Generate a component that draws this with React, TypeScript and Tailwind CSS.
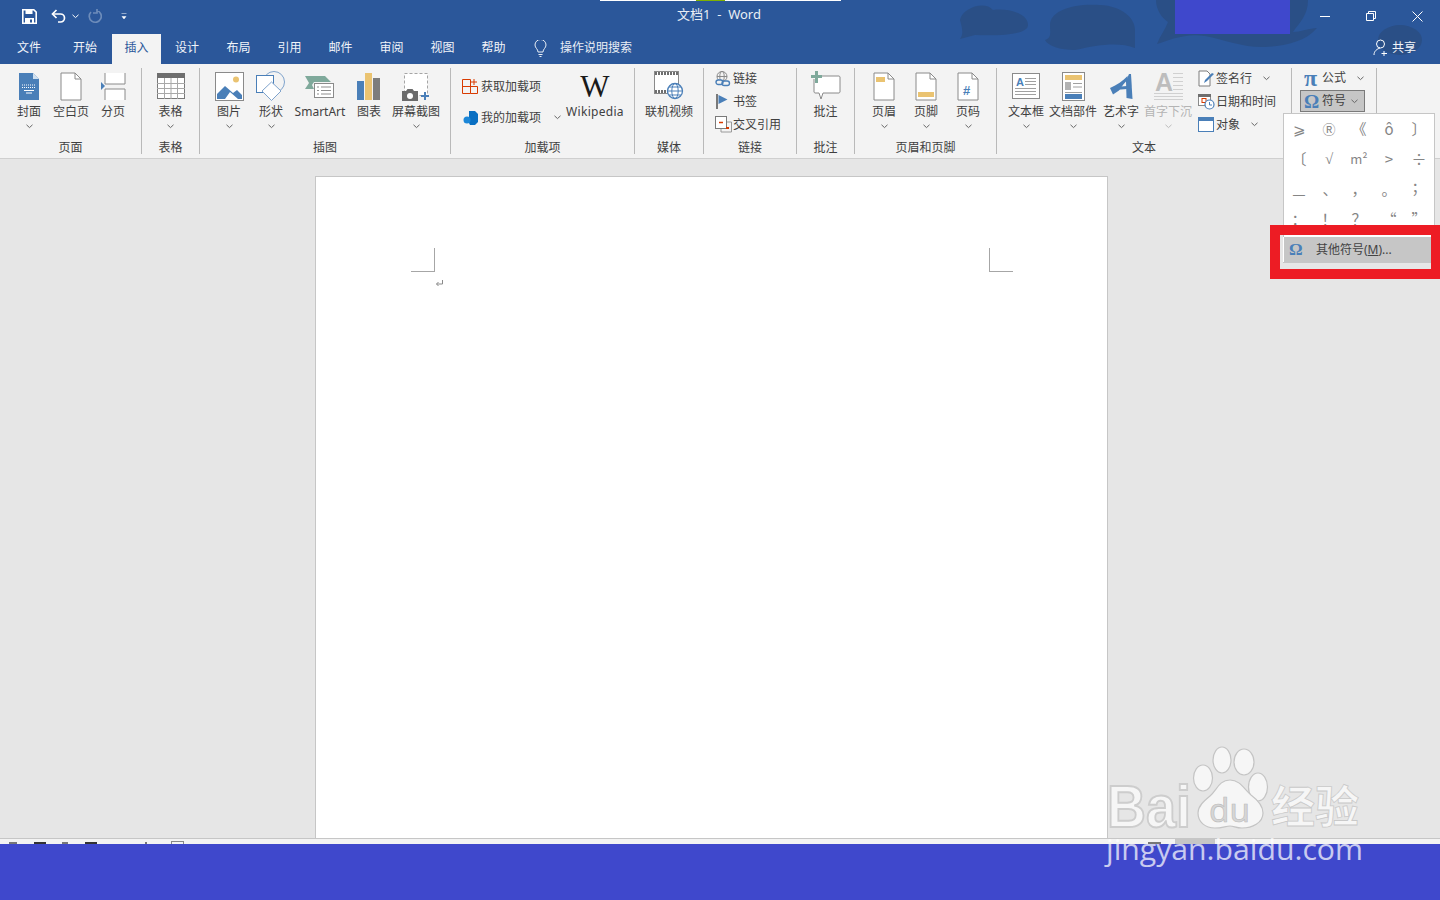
import type { ReactNode } from "react"

const GRAY = "#8a8a8a"
const BLUE = "#4a7fb8"

function Chevron({ color = "#666" }: { color?: string }) {
  return (
    <svg width="7" height="5" viewBox="0 0 7 5" className="block">
      <path d="M0.5 0.8 L3.5 3.6 L6.5 0.8" fill="none" stroke={color} strokeWidth="1" />
    </svg>
  )
}

function Icon({ w, h, children }: { w: number; h: number; children: ReactNode }) {
  return (
    <svg width={w} height={h} viewBox={`0 0 ${w} ${h}`} className="block shrink-0">
      {children}
    </svg>
  )
}

function LargeButton({
  label,
  width,
  icon,
  arrow = true,
  disabled = false,
}: {
  label: string
  width: string
  icon: ReactNode
  arrow?: boolean
  disabled?: boolean
}) {
  return (
    <div className={`flex flex-col items-center ${width}`}>
      <div className="h-[32px] flex items-center justify-center">{icon}</div>
      <div className={`h-[19px] leading-[19px] whitespace-nowrap ${disabled ? "text-[#b4b4b4]" : ""}`}>{label}</div>
      {arrow && (
        <div className="mt-[3px]">
          <Chevron color={disabled ? "#bbb" : "#666"} />
        </div>
      )}
    </div>
  )
}

function SmallButton({ icon, label, arrowGap }: { icon: ReactNode; label: string; arrowGap?: string }) {
  return (
    <div className="flex items-center h-[23px]">
      <div className="w-[18px] flex justify-start">{icon}</div>
      <span className="whitespace-nowrap">{label}</span>
      {arrowGap && (
        <div className={arrowGap}>
          <Chevron />
        </div>
      )}
    </div>
  )
}

function Group({ label, width, className = "", children }: { label: string; width: string; className?: string; children: ReactNode }) {
  return (
    <div className={`flex flex-col h-[86px] border-r border-[#b9b9b9] shrink-0 ${width}`}>
      <div className={`h-[68px] flex pt-[2px] ${className}`}>{children}</div>
      <div className="h-[18px] pt-[3px] leading-[18px] text-center">{label}</div>
    </div>
  )
}

const CoverIcon = (
  <Icon w={22} h={29}>
    <path d="M1 1h14l6 6v21H1z" fill={BLUE} />
    <path d="M15 1l6 6h-6z" fill="#cfe0f0" />
    <path d="M4 13h14M4 15.5h14" stroke="#fff" strokeDasharray="1 1" />
    <path d="M6 18.5h10M8 21h6" stroke="#fff" />
  </Icon>
)

const BlankIcon = (
  <Icon w={22} h={29}>
    <path d="M1 1h14l6 6v21H1z" fill="#fff" stroke={GRAY} />
    <path d="M15 1v6h6" fill="none" stroke={GRAY} />
  </Icon>
)

const BreakIcon = (
  <Icon w={26} h={29}>
    <path d="M5 1v11h20V1M5 28V17h20v11" fill="#fff" stroke={GRAY} />
    <path d="M1 10l4 4-4 4z" fill={BLUE} />
  </Icon>
)

const TableIcon = (
  <Icon w={28} h={26}>
    <rect x="0.5" y="0.5" width="27" height="25" fill="#fff" stroke="#7a7a7a" />
    <rect x="0" y="0" width="28" height="5" fill="#6e6e6e" />
    <path d="M0 10.5h28M0 15.5h28M0 20.5h28M7.5 5v21M14 5v21M20.5 5v21" stroke="#a8a8a8" />
  </Icon>
)

const PictureIcon = (
  <Icon w={29} h={29}>
    <rect x="0.5" y="0.5" width="28" height="28" fill="#fff" stroke={GRAY} />
    <circle cx="21" cy="7.5" r="3" fill="#eac371" />
    <path d="M2 27v-5l8-8 8 7 4-3 5 5v4h-4l-8-7-5 7z" fill={BLUE} />
  </Icon>
)

const ShapesIcon = (
  <Icon w={30} h={30}>
    <circle cx="18" cy="11" r="10.5" fill="none" stroke="#7fa3cc" />
    <rect x="0.5" y="4.5" width="17" height="17" fill="#fff" stroke={BLUE} />
    <path d="M15.5 11l9.500 9-9.500 9.500-9.500-9.500z" fill="#fff" stroke="#7fa3cc" />
  </Icon>
)

const SmartArtIcon = (
  <Icon w={30} h={25}>
    <path d="M0 2h20l6 6H9l-2 3 2 4H0l4-6z" fill="#7fa99b" />
    <rect x="9.5" y="9.5" width="19" height="14" fill="#fff" stroke={GRAY} />
    <path d="M12 13h2M16 13h10M12 16.5h2M16 16.5h10M12 20h2M16 20h10" stroke="#8d8d8d" />
  </Icon>
)

const ChartIcon = (
  <Icon w={24} h={27}>
    <rect x="0" y="8" width="7" height="19" fill={BLUE} />
    <rect x="8" y="0" width="7" height="27" fill="#eac371" />
    <rect x="16" y="5" width="7" height="22" fill="#7d7d7d" />
  </Icon>
)

const ScreenshotIcon = (
  <Icon w={30} h={29}>
    <rect x="3.5" y="1.5" width="23" height="22" fill="#fff" stroke="#a5a5a5" strokeDasharray="3 2" />
    <path d="M1 19h4l1.5-2h5l1.5 2h4v10H1z" fill="#6b6b6b" />
    <circle cx="9" cy="24" r="3" fill="#fff" />
    <path d="M24 20v8M20 24h8" stroke={BLUE} strokeWidth="2" />
  </Icon>
)

const GetAddinIcon = (
  <Icon w={16} h={16}>
    <path d="M0.500 0.500h8v14h-8zM0.500 7.500h15v7h-7M12 0v6M9 3h6" fill="none" stroke="#d83b01" />
  </Icon>
)

const MyAddinIcon = (
  <Icon w={15} h={15}>
    <path d="M6 1l6 0 3 3v8l-3 3H7l-1-2z" fill="#0a6fc2" />
    <circle cx="4" cy="10" r="3.5" fill="#1c87d8" />
  </Icon>
)

const VideoIcon = (
  <Icon w={30} h={30}>
    <rect x="0.5" y="0.5" width="24" height="22" fill="#fff" stroke={GRAY} />
    <path d="M1 2.5h23M1 20.5h14" stroke="#6e6e6e" strokeWidth="3" strokeDasharray="2 1" />
    <circle cx="21" cy="20" r="7.5" fill="#fff" stroke={BLUE} strokeWidth="1.3" />
    <ellipse cx="21" cy="20" rx="3.2" ry="7.5" fill="none" stroke={BLUE} />
    <path d="M14 20h14M15 16h12M15 24h12" stroke={BLUE} />
  </Icon>
)

const LinkIcon = (
  <Icon w={16} h={16}>
    <circle cx="7" cy="5.5" r="5" fill="none" stroke="#8a8a8a" />
    <ellipse cx="7" cy="5.5" rx="2.2" ry="5" fill="none" stroke="#8a8a8a" />
    <path d="M2 5.5h10" stroke="#8a8a8a" />
    <rect x="1" y="9" width="7" height="4.5" rx="2.2" fill="#f3f3f3" stroke={BLUE} strokeWidth="1.4" />
    <rect x="7" y="10" width="7.5" height="4.5" rx="2.2" fill="none" stroke={BLUE} strokeWidth="1.4" />
  </Icon>
)

const BookmarkIcon = (
  <Icon w={14} h={15}>
    <rect x="1" y="0" width="2" height="15" fill="#7a7a7a" />
    <path d="M3.5 1l9 4.5-9 4.5z" fill={BLUE} />
  </Icon>
)

const CrossRefIcon = (
  <Icon w={17} h={17}>
    <rect x="0.5" y="0.5" width="11" height="12" fill="#fff" stroke="#7a7a7a" />
    <path d="M4 6.5h4" stroke="#d83b01" strokeWidth="1.5" />
    <path d="M12 6h4.5v10H6v-3" fill="none" stroke="#9a9a9a" />
    <rect x="11" y="11" width="3" height="2" fill="#d83b01" />
  </Icon>
)

const CommentIcon = (
  <Icon w={30} h={30}>
    <path d="M5 5h23a1.500 1.500 0 0 1 1 1v15a1.500 1.500 0 0 1-1 1H12l-2 6-2-6H4a1.500 1.500 0 0 1-1-1V8" fill="#fff" stroke="#8a8a8a" />
    <path d="M4 0h3v4h4v3H7v5H4V7H0V4h4z" fill="#7fa99b" />
  </Icon>
)

function PageIcon({ children }: { children?: ReactNode }) {
  return (
    <Icon w={22} h={29}>
      <path d="M1 1h14l6 6v21H1z" fill="#fff" stroke={GRAY} />
      <path d="M15 1v6h6" fill="none" stroke={GRAY} />
      {children}
    </Icon>
  )
}

const TextBoxIcon = (
  <Icon w={28} h={26}>
    <rect x="0.5" y="0.5" width="27" height="25" fill="#fff" stroke={GRAY} />
    <text x="4" y="13" fontSize="11" fontWeight="700" fill={BLUE} fontFamily="'Liberation Sans', sans-serif">A</text>
    <path d="M13 5.500h11M13 8.500h11M13 11.500h11M3 15.500h21M3 18.500h21M3 21.500h21" stroke="#a0a0a0" />
  </Icon>
)

const DocPartsIcon = (
  <Icon w={23} h={29}>
    <rect x="0.5" y="0.500" width="22" height="28" fill="#fff" stroke={GRAY} />
    <rect x="3" y="3" width="17" height="5" fill="#eac371" />
    <rect x="3" y="10" width="6" height="8" fill="#b2b2b2" />
    <path d="M11 11.500h9M11 15h9M3 20.500h17" stroke="#a0a0a0" />
    <rect x="3" y="22" width="17" height="5" fill={BLUE} />
  </Icon>
)

const WordArtIcon = (
  <Icon w={24} h={27}>
    <path d="M20 1L22 1L23.500 26L17.500 25L17 8z" fill={BLUE} />
    <path d="M18.500 3C14 8 8 12 1 15L4 21.500L10 17.500C13 13 16 9 19 7z" fill={BLUE} />
    <path d="M6 14L18 13L18 16L6 17z" fill={BLUE} />
  </Icon>
)

const DropCapIcon = (
  <Icon w={29} h={29}>
    <text x="1" y="19" fontSize="25" fontWeight="700" fill="#bdbdbd" fontFamily="'Liberation Sans', sans-serif">A</text>
    <path d="M19 1.500h10M19 5.500h10M19 9.500h10M19 13.500h10M19 17.500h10M0 21.500h29M0 24.500h29M0 27.500h29" stroke="#d0d0d0" />
  </Icon>
)

const SignatureIcon = (
  <Icon w={17} h={17}>
    <path d="M1 1h8l3 3v12H1z" fill="#fff" stroke="#7d7d7d" />
    <path d="M6 13l1-3 7-7 2 1-7 7z" fill={BLUE} />
  </Icon>
)

const DateIcon = (
  <Icon w={17} h={17}>
    <rect x="0.5" y="1.500" width="12" height="11" fill="#fff" stroke="#8a8a8a" />
    <rect x="0" y="1" width="13" height="3" fill="#6e6e6e" />
    <rect x="4" y="5.500" width="4" height="4" fill="#fff" stroke="#d83b01" />
    <circle cx="11.500" cy="11.500" r="4.500" fill="#fff" stroke={BLUE} strokeWidth="1.200" />
    <path d="M11.500 9v3h2.500" fill="none" stroke={BLUE} />
  </Icon>
)

const ObjectIcon = (
  <Icon w={16} h={15}>
    <rect x="0.500" y="0.500" width="15" height="14" fill="#fff" stroke={BLUE} />
    <rect x="0" y="0" width="16" height="4" fill={BLUE} />
  </Icon>
)

function Baidu() {
  return (
    <svg width="270" height="135" viewBox="1100 745 270 135" className="absolute left-[1100px] top-[745px] pointer-events-none">
      <g fill="#f6f6f6" stroke="#c4c4c4" strokeWidth="1.200">
        <ellipse cx="1222" cy="760" rx="9" ry="13" />
        <ellipse cx="1244" cy="762" rx="10" ry="13" />
        <ellipse cx="1203" cy="778" rx="9.500" ry="13" />
        <ellipse cx="1258" cy="787" rx="9.500" ry="14" />
        <path d="M1230 780c10 0 14 9 21 15 8 6 12 12 12 18 0 10-11 15-21 15-6 0-8-2-12-2s-8 2-15 2c-10 0-17-6-17-15 0-7 6-12 12-17 7-6 9-16 20-16z" />
      </g>
      <text x="1107" y="827" fontSize="60" fontWeight="700" fill="#f6f6f6" stroke="#cdcdcd" strokeWidth="2" textLength="84" lengthAdjust="spacingAndGlyphs" fontFamily="'Liberation Sans', sans-serif">Bai</text>
      <text x="1209" y="822" fontSize="32" fontWeight="400" fill="#d6d6d6" stroke="#bbbbbb" strokeWidth="0.600" textLength="41" lengthAdjust="spacingAndGlyphs" fontFamily="'Noto Sans', sans-serif">du</text>
      <text x="1271" y="823" fontSize="44" fontWeight="700" fill="#f6f6f6" stroke="#c9c9c9" strokeWidth="0.800" textLength="88" lengthAdjust="spacingAndGlyphs" fontFamily="'Noto Sans CJK SC', sans-serif">经验</text>
      <text x="1106" y="860" fontSize="29" fill="#ffffff" fillOpacity="0.72" textLength="257" lengthAdjust="spacingAndGlyphs" fontFamily="'Open Sans', sans-serif">jingyan.baidu.com</text>
    </svg>
  )
}

const tabs = [
  { label: "文件", w: "w-[58px]" },
  { label: "开始", w: "w-[54px]" },
  { label: "插入", w: "w-[49px]", active: true },
  { label: "设计", w: "w-[52px]" },
  { label: "布局", w: "w-[51px]" },
  { label: "引用", w: "w-[51px]" },
  { label: "邮件", w: "w-[51px]" },
  { label: "审阅", w: "w-[51px]" },
  { label: "视图", w: "w-[51px]" },
  { label: "帮助", w: "w-[51px]" },
]

const symbols = [
  { s: "⩾" },
  { s: "Ⓡ", c: "text-[13px]" },
  { s: "《" },
  { s: "ô" },
  { s: "〕" },
  { s: "〔" },
  { s: "√", c: "font-['Liberation_Serif',serif]" },
  { s: "m²", c: "text-[13px]" },
  { s: ">" },
  { s: "÷" },
  { s: "—", c: "pt-[10px]" },
  { s: "、", c: "pl-[2px]" },
  { s: "，" },
  { s: "。" },
  { s: "；", c: "pb-[4px]" },
  { s: "：" },
  { s: "！" },
  { s: "？" },
  { s: "“" },
  { s: "”" },
]

export default function App() {
  return (
    <div className="relative w-[1440px] h-[900px] overflow-hidden flex flex-col bg-[#e6e6e6] text-[12px] text-[#3f3f3f] font-['Noto_Sans','Noto_Sans_CJK_SC',sans-serif]">
      {/* title bar */}
      <div className="relative h-[64px] bg-[#2b579a] text-white shrink-0">
        <svg width="480" height="64" viewBox="960 0 480 64" className="absolute right-0 top-0">
          <g fill="#2a4f86">
            <path d="M960 20C962 8 985 0 993 10C1005 8 1028 12 1028 25C1028 33 1010 36 975 35L960 39C964 33 962 28 960 20z" />
            <path d="M1050 25C1050 10 1075 3 1100 5C1122 6 1135 18 1135 30V48C1120 42 1100 44 1075 50C1060 50 1048 46 1045 40C1052 38 1050 32 1050 25z" />
            <path d="M1156 0C1156 10 1162 18 1168 22C1165 30 1160 36 1157 44C1170 40 1185 33 1205 36C1225 40 1245 48 1265 47C1285 46 1305 42 1317 28C1310 28 1300 32 1293 32C1300 22 1308 15 1308 0z" />
            <ellipse cx="1400" cy="40" rx="22" ry="15" />
          </g>
        </svg>
        <div className="relative h-[34px] flex items-center pb-[2px]">
          <div className="flex items-center pl-[22px]">
            <Icon w={15} h={15}>
              <path d="M0.800 0.800h11l2.400 2.400v11H0.800z" fill="none" stroke="#fff" strokeWidth="1.600" />
              <rect x="3.500" y="1" width="7" height="4" fill="#fff" />
              <rect x="3" y="9" width="9" height="5" fill="#fff" />
              <rect x="8" y="10.500" width="2" height="3" fill="#2b579a" />
            </Icon>
            <div className="ml-[14px]">
              <Icon w={15} h={14}>
                <path d="M2 5h7.500a4 4 0 0 1 0 8H7" fill="none" stroke="#fff" strokeWidth="1.700" />
                <path d="M5.500 1L1.500 5l4 4" fill="none" stroke="#fff" strokeWidth="1.700" />
              </Icon>
            </div>
            <div className="ml-[6px]">
              <Chevron color="#fff" />
            </div>
            <div className="ml-[8px]">
              <Icon w={15} h={15}>
                <path d="M4 3a6 6 0 1 0 6-1.500M10 0v4H6" fill="none" stroke="#6d8cba" strokeWidth="1.700" />
              </Icon>
            </div>
            <div className="ml-[19px]">
              <Icon w={7} h={7}>
                <path d="M0.500 0.500h5M1 3.500h4l-2 2.500z" fill="#fff" stroke="#fff" strokeWidth="0.500" />
              </Icon>
            </div>
          </div>
          <div className="absolute left-[677px] top-[4px] text-[13px] leading-[20px] whitespace-pre text-[#e9eef5]">文档1  -  Word</div>
          <div className="ml-auto flex items-center h-full">
            <div className="w-[46px] flex justify-center">
              <Icon w={10} h={10}>
                <path d="M0 5.500h10" stroke="#fff" />
              </Icon>
            </div>
            <div className="w-[46px] flex justify-center">
              <Icon w={10} h={10}>
                <path d="M0.500 2.500h7v7h-7zM2.500 2.500v-2h7v7h-2" fill="none" stroke="#fff" />
              </Icon>
            </div>
            <div className="w-[46px] flex justify-center">
              <Icon w={11} h={11}>
                <path d="M0.500 0.500l10 10M10.500 0.500l-10 10" stroke="#fff" />
              </Icon>
            </div>
          </div>
        </div>
        <div className="relative h-[30px] flex items-stretch">
          {tabs.map((t) => (
            <div
              key={t.label}
              className={`${t.w} flex items-center justify-center pb-[3px] ${t.active ? "bg-[#f3f3f3] text-[#2b579a]" : "text-[#f1f4f9]"}`}
            >
              {t.label}
            </div>
          ))}
          <div className="ml-[15px] flex items-center pb-[1px]">
            <Icon w={13} h={17}>
              <path d="M4 12c0-3-3-4-3-7a5.500 5.500 0 0 1 11 0c0 3-3 4-3 7zM4.500 14.500h4M5.500 16.500h2" fill="none" stroke="#e9eef5" />
            </Icon>
          </div>
          <div className="ml-[13px] flex items-center pb-[3px] text-[#e9eef5]">操作说明搜索</div>
          <div className="ml-auto mr-[24px] flex items-center gap-[4px] pb-[3px] text-[#f1f4f9]">
            <Icon w={15} h={17}>
              <circle cx="7.500" cy="5" r="4" fill="none" stroke="#fff" />
              <path d="M1 16c0-4 3-6 6-7M11 12v5M8.500 14.500h5.500" fill="none" stroke="#fff" />
            </Icon>
            共享
          </div>
        </div>
      </div>

      {/* ribbon */}
      <div className="h-[95px] bg-[#f3f3f3] border-b border-[#cfcfcf] flex pt-[4px] shrink-0">
        <Group label="页面" width="w-[142px]" className="pl-[8px]">
          <LargeButton label="封面" width="w-[42px]" icon={CoverIcon} />
          <LargeButton label="空白页" width="w-[42px]" icon={BlankIcon} arrow={false} />
          <LargeButton label="分页" width="w-[42px]" icon={BreakIcon} arrow={false} />
        </Group>
        <Group label="表格" width="w-[58px]" className="justify-center">
          <LargeButton label="表格" width="w-[42px]" icon={TableIcon} />
        </Group>
        <Group label="插图" width="w-[251px]" className="pl-[8px]">
          <LargeButton label="图片" width="w-[42px]" icon={PictureIcon} />
          <LargeButton label="形状" width="w-[42px]" icon={ShapesIcon} />
          <LargeButton label="SmartArt" width="w-[56px]" icon={SmartArtIcon} arrow={false} />
          <LargeButton label="图表" width="w-[42px]" icon={ChartIcon} arrow={false} />
          <LargeButton label="屏幕截图" width="w-[52px]" icon={ScreenshotIcon} />
        </Group>
        <Group label="加载项" width="w-[184px]" className="pl-[11px]">
          <div className="flex flex-col w-[101px]">
            <div className="h-[31px] flex items-center gap-[3px] mt-[1px]">
              {GetAddinIcon}
              <span>获取加载项</span>
            </div>
            <div className="h-[31px] flex items-center gap-[3px] pl-[1px]">
              {MyAddinIcon}
              <span>我的加载项</span>
              <span className="ml-[10px]">
                <Chevron />
              </span>
            </div>
          </div>
          <div className="flex flex-col items-center w-[64px]">
            <div className="h-[32px] flex items-center font-['Liberation_Serif',serif] text-[31px] text-[#1a1a1a] leading-none">W</div>
            <div className="h-[19px] leading-[19px] whitespace-nowrap tracking-[0.3px]">Wikipedia</div>
          </div>
        </Group>
        <Group label="媒体" width="w-[69px]" className="justify-center">
          <LargeButton label="联机视频" width="w-[52px]" icon={VideoIcon} arrow={false} />
        </Group>
        <Group label="链接" width="w-[93px]" className="pl-[11px] flex-col">
          <div className="-mt-[3px]">
            <SmallButton icon={LinkIcon} label="链接" />
            <SmallButton icon={BookmarkIcon} label="书签" />
            <SmallButton icon={CrossRefIcon} label="交叉引用" />
          </div>
        </Group>
        <Group label="批注" width="w-[58px]" className="justify-center">
          <LargeButton label="批注" width="w-[42px]" icon={CommentIcon} arrow={false} />
        </Group>
        <Group label="页眉和页脚" width="w-[142px]" className="pl-[8px]">
          <LargeButton
            label="页眉"
            width="w-[42px]"
            icon={
              <PageIcon>
                <rect x="3" y="5" width="9" height="5" fill="#eac371" />
              </PageIcon>
            }
          />
          <LargeButton
            label="页脚"
            width="w-[42px]"
            icon={
              <PageIcon>
                <rect x="3" y="20" width="16" height="5" fill="#eac371" />
              </PageIcon>
            }
          />
          <LargeButton
            label="页码"
            width="w-[42px]"
            icon={
              <PageIcon>
                <text x="6" y="23" fontSize="13" fontWeight="700" fill={BLUE} fontFamily="'Liberation Sans', sans-serif">#</text>
              </PageIcon>
            }
          />
        </Group>
        <Group label="文本" width="w-[295px]" className="pl-[8px]">
          <LargeButton label="文本框" width="w-[42px]" icon={TextBoxIcon} />
          <LargeButton label="文档部件" width="w-[52px]" icon={DocPartsIcon} />
          <LargeButton label="艺术字" width="w-[44px]" icon={WordArtIcon} />
          <LargeButton label="首字下沉" width="w-[50px]" icon={DropCapIcon} disabled />
          <div className="flex flex-col ml-[5px] -mt-[3px]">
            <SmallButton icon={SignatureIcon} label="签名行" arrowGap="ml-[11px]" />
            <SmallButton icon={DateIcon} label="日期和时间" />
            <SmallButton icon={ObjectIcon} label="对象" arrowGap="ml-[11px]" />
          </div>
        </Group>
        <Group label="" width="w-[85px]" className="pl-[8px] flex-col">
          <div className="-mt-[3px] flex items-center h-[22px] pl-[4px]">
            <span className="w-[18px] font-['Liberation_Serif',serif] font-bold text-[24px] leading-[20px] text-[#4a7fb8]">π</span>
            <span>公式</span>
            <span className="ml-[11px]">
              <Chevron />
            </span>
          </div>
          <div className="mt-[1px] flex items-center h-[22px] w-[65px] pl-[3px] bg-[#c6c6c6] border border-[#7a7a7a]">
            <span className="w-[18px] font-['Liberation_Serif',serif] font-bold text-[19px] leading-none text-[#4a7fb8]">Ω</span>
            <span>符号</span>
            <span className="ml-[5px]">
              <Chevron />
            </span>
          </div>
        </Group>
      </div>

      {/* document */}
      <div className="flex-1 pt-[17px] pl-[315px]">
        <div className="w-[793px] h-[662px] bg-white border-x border-t border-[#c6c6c6] pt-[71px] pl-[95px] pr-[94px]">
          <div className="flex justify-between">
            <div className="w-[24px] h-[24px] border-r border-b border-[#a6a6a6]" />
            <div className="w-[24px] h-[24px] border-l border-b border-[#a6a6a6]" />
          </div>
          <div className="pl-[24px] pt-[7px]">
            <Icon w={9} h={9}>
              <path d="M7.500 1v4H1.500M3.500 3l-2 2 2 2" fill="none" stroke="#8a8a8a" />
            </Icon>
          </div>
        </div>
      </div>

      {/* status bar, mostly covered */}
      <div className="h-[6px] bg-[#f3f3f3] border-t border-[#c6c6c6] flex items-end shrink-0">
        <div className="ml-[9px] w-[8px] h-[2px] bg-[#777]" />
        <div className="ml-[17px] w-[12px] h-[2px] bg-[#333]" />
        <div className="ml-[16px] w-[6px] h-[2px] bg-[#777]" />
        <div className="ml-[17px] w-[12px] h-[2px] bg-[#333]" />
        <div className="ml-[48px] w-[2px] h-[2px] bg-[#777]" />
        <div className="ml-[24px] w-[13px] h-[3px] border-x border-t border-[#888]" />
        <div className="ml-[964px] w-[13px] h-[2px] bg-[#777]" />
        <div className="ml-[14px] w-[40px] h-[5px] bg-[#c6c6c6]" />
      </div>
      <div className="h-[56px] bg-[#3f48cc] shrink-0" />

      {/* pasted-over marks on the screenshot */}
      <div className="absolute left-[600px] top-0 w-[241px] h-px bg-white" />
      <div className="absolute left-[696px] top-0 w-[29px] h-px bg-[#7fb000]" />
      <div className="absolute left-[1175px] top-0 w-[115px] h-[34px] bg-[#3f48cc]" />

      {/* symbol menu */}
      <div className="absolute left-[1283px] top-[113px] w-[152px] h-[150px] bg-white border border-[#c6c6c6] text-[#858585]">
        <div className="grid grid-cols-5 w-[150px] font-['Noto_Sans_CJK_SC',sans-serif] text-[15px]">
          {symbols.map((item, i) => (
            <div key={i} className={`h-[30px] flex items-center justify-center ${item.c ?? ""}`}>
              {item.s}
            </div>
          ))}
        </div>
        <div className="mt-[3px] -ml-px h-[25px] bg-[#c6c6c6] border-l border-white flex items-center text-[#444]">
          <span className="ml-[5px] w-[27px] font-['Liberation_Serif',serif] font-bold text-[17px] leading-none text-[#4a7fb8]">Ω</span>
          <span>
            其他符号(<span className="underline">M</span>)...
          </span>
        </div>
      </div>
      <div className="absolute left-[1270px] top-[225px] w-[170px] h-[54px] border-y-[10px] border-l-[10px] border-r-[9px] border-[#ed1c24]" />

      <Baidu />
    </div>
  )
}
